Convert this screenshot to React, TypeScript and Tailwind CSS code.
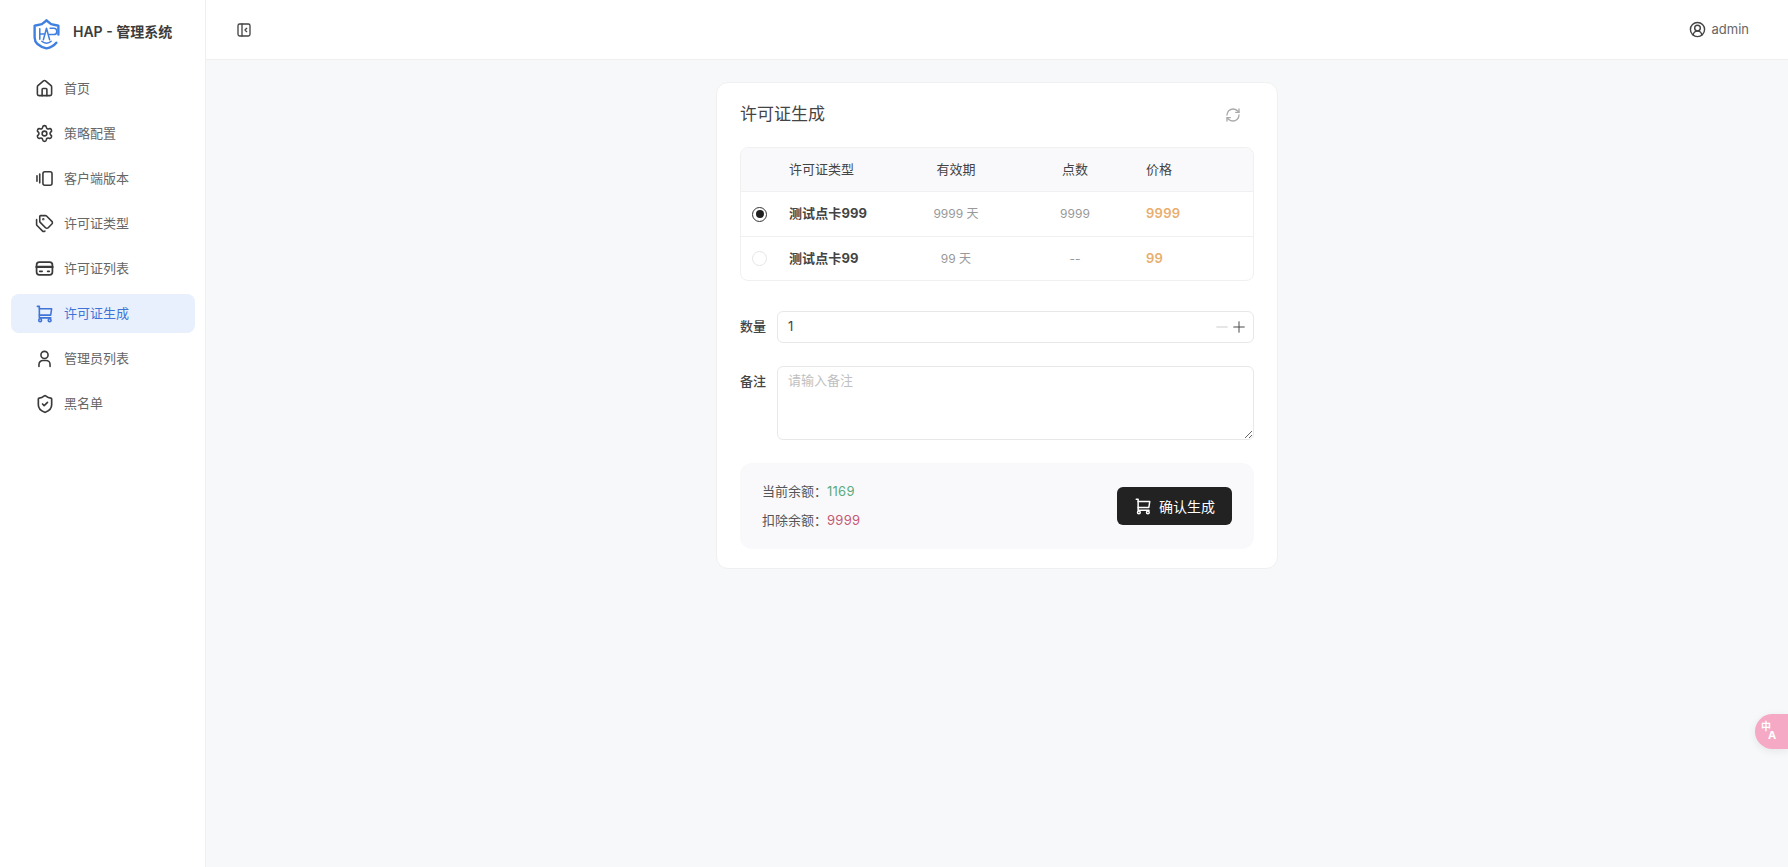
import React from "react";
import { House, Settings, Tags, ShieldCheck, RefreshCw, CircleUserRound, Minus, Plus } from "lucide-react";

const FONT = { fontFamily: 'Inter, "Noto Sans CJK SC", "Noto Sans", sans-serif' };

function Cart({ className = "" }: { className?: string }) {
  return (
    <svg viewBox="0 0 24 24" fill="none" stroke="currentColor" strokeWidth="2" strokeLinecap="round" strokeLinejoin="round" className={className}>
      <path d="M3 3h2.5v14.5H20" />
      <path d="M5.5 6H21l-1.2 8H5.5" />
      <circle cx="6.5" cy="20.5" r="1.8" />
      <circle cx="18.5" cy="20.5" r="1.8" />
    </svg>
  );
}

function Carousel({ className = "" }: { className?: string }) {
  return (
    <svg viewBox="0 0 24 24" fill="none" stroke="currentColor" strokeWidth="2" strokeLinecap="round" strokeLinejoin="round" className={className}>
      <rect x="10" y="3.5" width="11.5" height="17" rx="2.5" />
      <path d="M6 6.5v11" />
      <path d="M2.5 8.5v7" />
    </svg>
  );
}

function CardIcon({ className = "" }: { className?: string }) {
  return (
    <svg viewBox="0 0 24 24" fill="none" stroke="currentColor" strokeWidth="2.2" strokeLinecap="round" strokeLinejoin="round" className={className}>
      <rect x="2" y="4" width="20" height="16" rx="3.5" />
      <path d="M2 10h20" strokeWidth="3" />
      <path d="M6 15.5h3" />
      <path d="M16 15.5h2" />
    </svg>
  );
}

function UserIcon({ className = "" }: { className?: string }) {
  return (
    <svg viewBox="0 0 24 24" fill="none" stroke="currentColor" strokeWidth="2" strokeLinecap="round" strokeLinejoin="round" className={className}>
      <circle cx="12" cy="7.5" r="4.5" />
      <path d="M5 22v-2.5a5 5 0 0 1 5-5h4a5 5 0 0 1 5 5V22" />
    </svg>
  );
}

function Collapse({ className = "" }: { className?: string }) {
  return (
    <svg viewBox="0 0 24 24" fill="none" stroke="currentColor" strokeWidth="2" strokeLinecap="round" strokeLinejoin="round" className={className}>
      <rect x="3" y="3" width="18" height="18" rx="2.5" />
      <path d="M9 3v18" />
      <path d="M16 9.5 13.5 12l2.5 2.5" />
    </svg>
  );
}

function Logo() {
  return (
    <svg viewBox="0 0 26 30" fill="none" stroke="#3f7fe0" strokeLinecap="round" strokeLinejoin="round" className="w-[27px] h-[31px] mt-[7px] shrink-0">
      <path d="M13 1.5 17.5 5 24.5 6.5V15" strokeWidth="2.3" />
      <path d="M13 1.5 8.5 5 1.5 6.5V18c0 5 3.5 8.5 11.5 10.5 4.5-1 7.5-3 9.5-5.5" strokeWidth="2.3" />
      <path d="M6.5 9.5v10M6.5 14.5h4.5" strokeWidth="1.5" />
      <path d="M10 20l3-11 3 11" strokeWidth="1.5" />
      <path d="M16.5 9h3.5a3 3 0 0 1 0 6h-4" strokeWidth="1.5" />
      <path d="M8.5 21.5c2.5 2.5 6.5 2.5 9 0" strokeWidth="1.5" />
    </svg>
  );
}

const items = [
  { label: "首页", icon: <House className="w-[19px] h-[19px] shrink-0" strokeWidth={2} /> },
  { label: "策略配置", icon: <Settings className="w-[19px] h-[19px] shrink-0" strokeWidth={2} /> },
  { label: "客户端版本", icon: <Carousel className="w-[19px] h-[19px] shrink-0" /> },
  { label: "许可证类型", icon: <Tags className="w-[19px] h-[19px] shrink-0" strokeWidth={2} /> },
  { label: "许可证列表", icon: <CardIcon className="w-[19px] h-[19px] shrink-0" /> },
  { label: "许可证生成", icon: <Cart className="w-[19px] h-[19px] shrink-0" />, active: true },
  { label: "管理员列表", icon: <UserIcon className="w-[19px] h-[19px] shrink-0" /> },
  { label: "黑名单", icon: <ShieldCheck className="w-[20px] h-[20px] shrink-0" strokeWidth={2} /> },
];

const GRID = "grid grid-cols-[48px_107px_120px_118px_1fr] items-center";

function Row({ on, name, days, pts, price, last }: { on?: boolean; name: string; days: string; pts: string; price: string; last?: boolean }) {
  return (
    <div className={`${GRID} ${last ? "h-[43px]" : "h-[45px] border-b border-[#f0f0f0]"}`}>
      <div className="pl-[11px]">
        {on ? (
          <div className="w-[15px] h-[15px] rounded-full border-[1.5px] border-[#333] flex items-center justify-center">
            <div className="w-[8px] h-[8px] rounded-full bg-[#1f1f1f]" />
          </div>
        ) : (
          <div className="w-[15px] h-[15px] rounded-full border border-[#e5e5e5]" />
        )}
      </div>
      <div className="text-[13px] font-bold text-[#444] tracking-[0.1px]">{name}</div>
      <div className="text-[12px] text-[#999] text-center">{days}</div>
      <div className="text-[12px] text-[#999] text-center">{pts}</div>
      <div className="pl-[12px] text-[13px] font-semibold text-[#e8ae6e] tracking-[0.25px]">{price}</div>
    </div>
  );
}

export default function App() {
  return (
    <div style={FONT} className="flex h-[867px] w-full overflow-hidden bg-[#f7f8fa] relative">
      <aside className="w-[206px] shrink-0 bg-white border-r border-[#efefef] flex flex-col">
        <div className="h-[60px] flex items-center pl-[33px] pt-[2px] gap-[13px]">
          <Logo />
          <span className="text-[14px] font-semibold text-[#3c3c3c]">HAP - 管理系统</span>
        </div>
        <nav className="flex flex-col gap-[6px] pl-[11px] pr-[10px] pt-[9px]">
          {items.map((it) => (
            <div
              key={it.label}
              className={`h-[39px] rounded-lg flex items-center pl-[25px] gap-[11px] text-[13px] ${
                it.active ? "bg-[#e8f0fd] text-[#3f74d6]" : "text-[#666]"
              }`}
            >
              <span className={`w-[17px] flex justify-center ${it.active ? "text-[#3f74d6]" : "text-[#3a3a3a]"}`}>{it.icon}</span>
              <span>{it.label}</span>
            </div>
          ))}
        </nav>
      </aside>
      <div className="flex-1 flex flex-col min-w-0">
        <header className="h-[60px] shrink-0 bg-white border-b border-[#efefef] flex items-center justify-between pl-[30px] pr-[39px]">
          <Collapse className="w-[16px] h-[16px] text-[#444]" />
          <div className="flex items-center gap-[6px] text-[13px] text-[#666]">
            <CircleUserRound className="w-[17px] h-[17px] text-[#444]" strokeWidth={2} />
            <span>admin</span>
          </div>
        </header>
        <main className="flex-1 flex justify-center pt-[22px]">
          <div className="w-[562px] h-[487px] bg-white rounded-xl border border-[#f0f0f0] px-[23px]">
            <div className="flex items-center justify-between h-[64px]">
              <span className="text-[17px] text-[#444]">许可证生成</span>
              <RefreshCw className="w-[16px] h-[16px] text-[#aaa] mr-[13px]" strokeWidth={2} />
            </div>
            <div className="border border-[#f0f0f0] rounded-lg overflow-hidden">
              <div className={`${GRID} h-[44px] bg-[#f9f9fb] border-b border-[#f0f0f0] text-[13px] text-[#444]`}>
                <div />
                <div>许可证类型</div>
                <div className="text-center">有效期</div>
                <div className="text-center">点数</div>
                <div className="pl-[12px]">价格</div>
              </div>
              <Row on name="测试点卡999" days="9999 天" pts="9999" price="9999" />
              <Row name="测试点卡99" days="99 天" pts="--" price="99" last />
            </div>
            <div className="flex items-center gap-[11px] mt-[30px]">
              <span className="text-[13px] font-medium text-[#444] w-[26px] shrink-0">数量</span>
              <div className="flex-1 h-[32px] rounded-md border border-[#e8e8e8] flex items-center justify-between pl-[10px] pr-[5px] text-[13px] text-[#444]">
                <span>1</span>
                <span className="flex items-center">
                  <Minus className="w-[18px] h-[18px] text-[#ccc] -mr-[1px]" strokeWidth={1.3} />
                  <Plus className="w-[18px] h-[18px] text-[#444]" strokeWidth={1.3} />
                </span>
              </div>
            </div>
            <div className="flex items-start gap-[11px] mt-[23px]">
              <span className="text-[13px] font-medium text-[#444] w-[26px] shrink-0 mt-[6px]">备注</span>
              <textarea
                readOnly
                placeholder="请输入备注"
                className="flex-1 h-[74px] rounded-md border border-[#e8e8e8] px-[10px] py-[4px] text-[13px] outline-none placeholder:text-[#c0c0c0] block"
              />
            </div>
            <div className="mt-[23px] h-[86px] rounded-xl bg-[#f9f9fb] flex items-center justify-between pl-[22px] pr-[22px]">
              <div className="flex flex-col gap-[10px] text-[13px] text-[#555]">
                <div className="h-[19px] flex items-center">当前余额：<span className="text-[#5aa97f] tracking-[0.25px]">1169</span></div>
                <div className="h-[19px] flex items-center">扣除余额：<span className="text-[#c45a74] tracking-[0.25px]">9999</span></div>
              </div>
              <button className="w-[115px] h-[38px] rounded-md bg-[#222] text-white text-[14px] flex items-center justify-center gap-[7px]">
                <Cart className="w-[18px] h-[18px]" />
                确认生成
              </button>
            </div>
          </div>
        </main>
      </div>
      <div className="absolute right-0 top-[714px] w-[33px] h-[35px] rounded-l-[18px] bg-[#f6a9c5] shadow-[0_2px_8px_rgba(0,0,0,0.08)] text-white">
        <span className="absolute left-[6px] top-[7px] text-[10px] leading-[10px] font-bold">中</span>
        <span className="absolute left-[13px] top-[16px] text-[11px] leading-[11px] font-bold">A</span>
      </div>
    </div>
  );
}
